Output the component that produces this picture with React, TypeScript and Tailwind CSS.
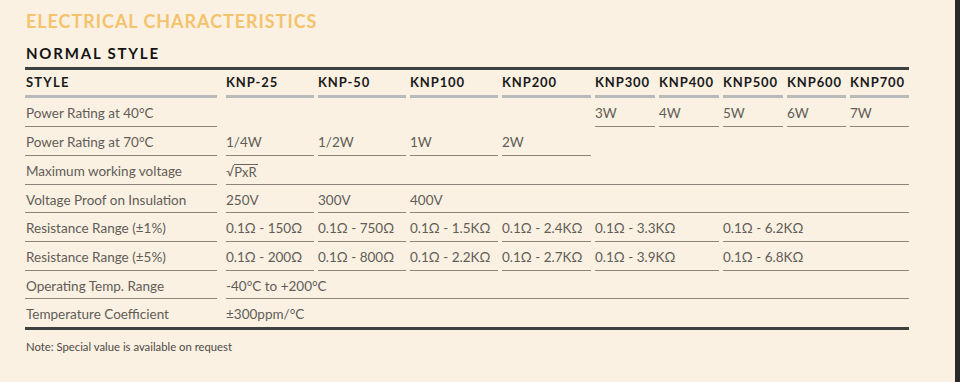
import React from "react";

type Cell = { text?: React.ReactNode; span?: number; line?: boolean };
type Row = { label: string; cells: Cell[] };

const spanClass: Record<number, string> = {
  1: "col-span-1",
  2: "col-span-2",
  3: "col-span-3",
  7: "col-span-7",
  9: "col-span-9",
};

const heads = ["KNP-25", "KNP-50", "KNP100", "KNP200", "KNP300", "KNP400", "KNP500", "KNP600", "KNP700"];

const empty: Cell = { line: false };
const v = (text: React.ReactNode, span = 1, line = true): Cell => ({ text, span, line });

const Sqrt = () => (
  <span className="flex items-center">
    <span className="text-[13px]">√</span>
    <span className="border-t border-[#6b655e] leading-[14px] pr-[1px] text-[13px]">PxR</span>
  </span>
);

const rows: Row[] = [
  {
    label: "Power Rating at 40°C",
    cells: [empty, empty, empty, empty, v("3W"), v("4W"), v("5W"), v("6W"), v("7W")],
  },
  {
    label: "Power Rating at 70°C",
    cells: [v("1/4W"), v("1/2W"), v("1W"), v("2W"), empty, empty, empty, empty, empty],
  },
  { label: "Maximum working voltage", cells: [v(<Sqrt />, 9)] },
  { label: "Voltage Proof on Insulation", cells: [v("250V"), v("300V"), v("400V", 7)] },
  {
    label: "Resistance Range (±1%)",
    cells: [v("0.1Ω - 150Ω"), v("0.1Ω - 750Ω"), v("0.1Ω - 1.5KΩ"), v("0.1Ω - 2.4KΩ"), v("0.1Ω - 3.3KΩ", 2), v("0.1Ω - 6.2KΩ", 3)],
  },
  {
    label: "Resistance Range (±5%)",
    cells: [v("0.1Ω - 200Ω"), v("0.1Ω - 800Ω"), v("0.1Ω - 2.2KΩ"), v("0.1Ω - 2.7KΩ"), v("0.1Ω - 3.9KΩ", 2), v("0.1Ω - 6.8KΩ", 3)],
  },
  { label: "Operating Temp. Range", cells: [v("-40°C to +200°C", 9)] },
  { label: "Temperature Coefficient", cells: [v("±300ppm/°C", 9, false)] },
];

export default function App() {
  return (
    <div className="w-[960px] h-[382px] flex bg-[#faf1e3] font-['Lato',sans-serif] overflow-hidden">
      <div className="flex-1 pl-[25px] flex flex-col">
        <h2 className="mt-[12px] ml-[1px] text-[18px] leading-[18px] font-bold text-[#f4c36c] tracking-[0.95px]">
          ELECTRICAL CHARACTERISTICS
        </h2>
        <h3 className="mt-[16px] ml-[1px] text-[15px] leading-[15px] font-bold text-[#141414] tracking-[1.8px]">
          NORMAL STYLE
        </h3>
        <div className="mt-[6px] w-[884px] h-[3px] bg-[#3d4240]" />

        <div className="w-[884px] grid grid-cols-[197px_88px_88px_88px_89px_60px_60px_60px_59px_59px] gap-x-[4px] grid-rows-[28px_29px_29px_29px_28px_29px_29px_28px_28px] text-[13.5px] text-[#625c56]">
          <div className="mr-[5px] border-b-[3px] border-[#b7baba] flex items-center pl-[1px] font-bold text-[13px] tracking-[1.2px] text-[#1a1a1a]">
            STYLE
          </div>
          {heads.map((h) => (
            <div
              key={h}
              className="border-b-[3px] border-[#b7baba] flex items-center font-bold text-[13px] tracking-[0.9px] text-[#1a1a1a]"
            >
              {h}
            </div>
          ))}

          {rows.map((r, i) => (
            <React.Fragment key={i}>
              <div
                className={
                  "mr-[5px] flex items-center pt-[3px] pl-[1px] " +
                  (i < rows.length - 1 ? "border-b border-[#8c857b]" : "")
                }
              >
                {r.label}
              </div>
              {r.cells.map((c, j) => (
                <div
                  key={j}
                  className={
                    "flex items-center pt-[3px] whitespace-nowrap " +
                    spanClass[c.span ?? 1] +
                    (c.line ? " border-b border-[#8c857b]" : "")
                  }
                >
                  {c.text}
                </div>
              ))}
            </React.Fragment>
          ))}
        </div>
        <div className="w-[884px] h-[3px] bg-[#3d4240]" />

        <p className="mt-[11px] ml-[1px] text-[11.3px] leading-[11px] text-[#4f4a45]">
          Note: Special value is available on request
        </p>
      </div>
      <div className="w-[5px] bg-[#2a2a2a]" />
    </div>
  );
}
